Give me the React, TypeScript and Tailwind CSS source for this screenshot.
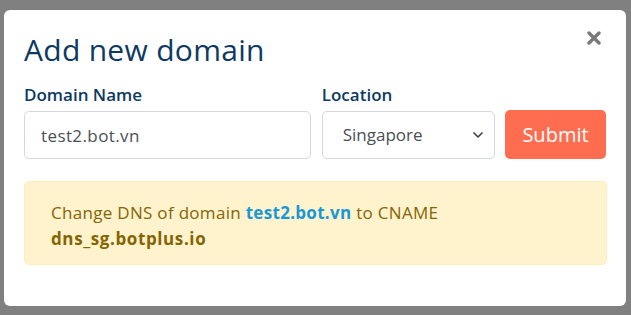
import { ChevronDown } from "lucide-react";

export default function App() {
  return (
    <div className="w-[631px] h-[315px] bg-[#808080] pt-[10px] pl-[4px] font-['Open_Sans',sans-serif]">
      <div className="w-[622px] h-[296px] bg-white rounded-[6px] px-[20px] pt-[20px] relative">
        {/* close */}
        <button className="absolute right-[25px] top-[21px] text-[#7a7a7a]">
          <svg width="14" height="14" viewBox="0 0 14 14">
            <path d="M2 2 L12 12 M12 2 L2 12" stroke="currentColor" strokeWidth="3.4" strokeLinecap="round" />
          </svg>
        </button>

        <h1 className="text-[30px] leading-[40px] text-[#0e3a61] tracking-[0.3px]">Add new domain</h1>

        <div className="flex gap-[10px] mt-[14px]">
          <div className="w-[288px] mr-[1px]">
            <label className="block text-[17px] leading-[22px] font-semibold text-[#0e3a61] mb-[5px]">
              Domain Name
            </label>
            <input
              type="text"
              defaultValue="test2.bot.vn"
              className="w-full h-[48px] border border-[#d4d7dc] rounded-[5px] px-[16px] text-[17px] tracking-[0.4px] text-[#4a4f55] outline-none"
            />
          </div>
          <div className="w-[174px]">
            <label className="block text-[17px] leading-[22px] font-semibold text-[#0e3a61] mb-[5px]">
              Location
            </label>
            <div className="relative h-[48px] border border-[#d4d7dc] rounded-[5px] flex items-center pl-[20px] text-[17px] text-[#4a4f55]">
              Singapore
              <ChevronDown className="absolute right-[8px] top-[15px] w-[16px] h-[16px] text-[#444]" strokeWidth={2.6} />
            </div>
          </div>
          <div className="flex items-end">
            <button className="w-[101px] h-[49px] rounded-[5px] bg-[#ff6d50] text-white text-[20px]">
              Submit
            </button>
          </div>
        </div>

        <div className="mt-[22px] w-[583px] h-[84px] bg-[#fff3cd] border border-[#ffeeba] rounded-[5px] px-[26px] pt-[18px] text-[17px] tracking-[0.3px] leading-[26px] text-[#856404]">
          Change DNS of domain <span className="font-bold text-[#1a98d5]">test2.bot.vn</span> to CNAME
          <br />
          <span className="font-bold tracking-[0.6px]">dns_sg.botplus.io</span>
        </div>
      </div>
    </div>
  );
}
